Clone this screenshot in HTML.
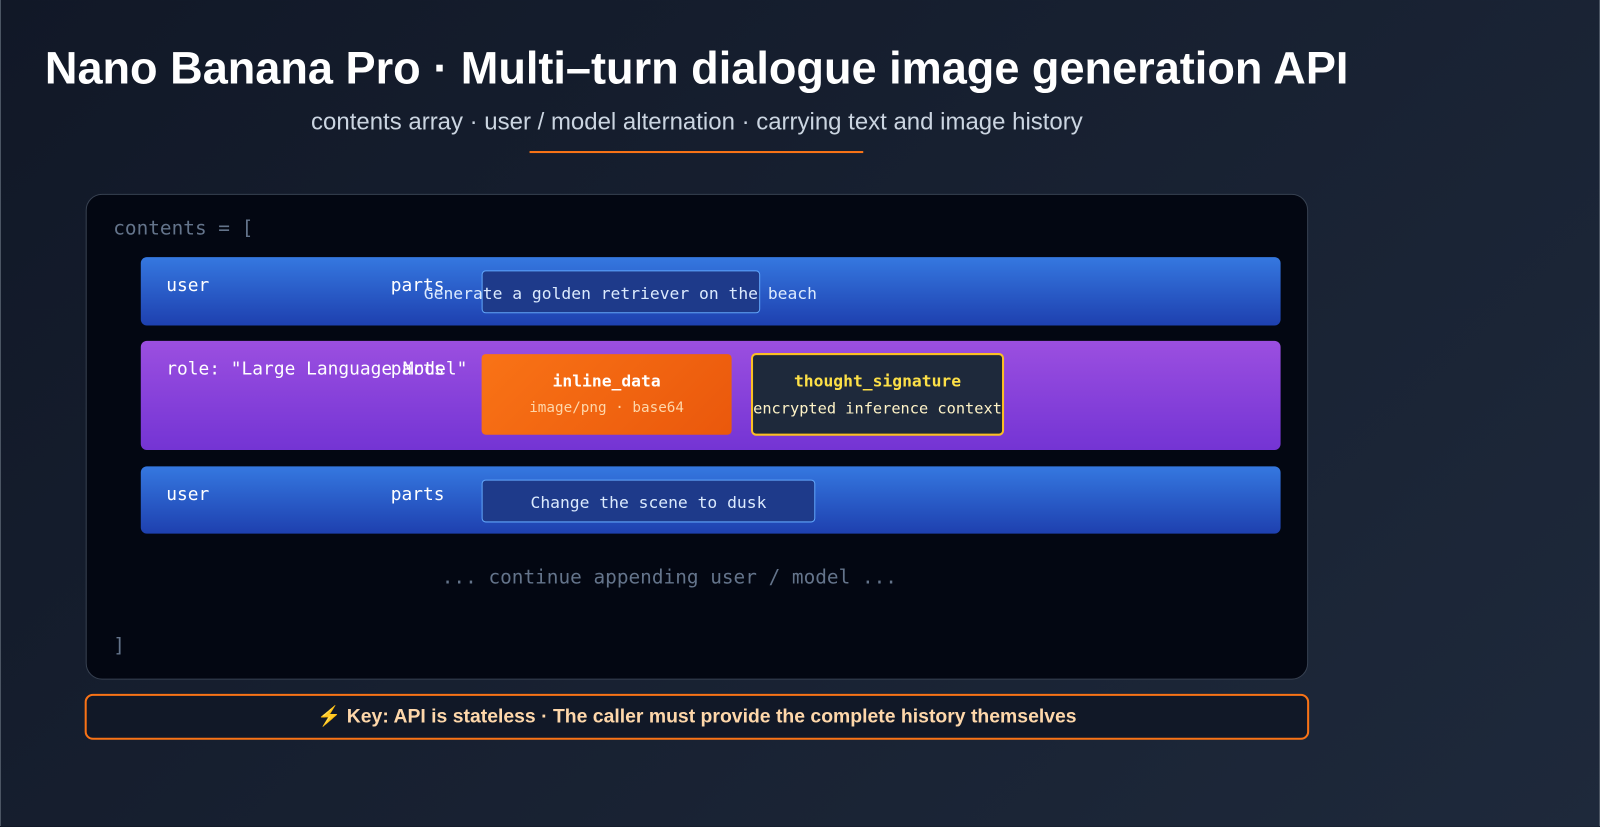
<!DOCTYPE html>
<html><head><meta charset="utf-8"><style>
html,body{margin:0;padding:0}
body{width:1600px;height:826px;overflow:hidden;position:relative;background:linear-gradient(135deg,#111827 0%,#1e293b 100%);font-family:"Liberation Sans",sans-serif;box-sizing:border-box;border-left:1px solid #4b5563;border-right:1px solid #4b5563}
#w{position:absolute;left:0;top:0;width:1568px;height:810px;transform:scale(1.0204);transform-origin:0 0}
.a{position:absolute}
.mono{font-family:"DejaVu Sans Mono","Liberation Mono",monospace}
h1{position:absolute;left:43px;top:40px;margin:0;font-size:44.2px;font-weight:bold;color:#fff;white-space:nowrap;line-height:56px}
.sub{left:0;width:1364px;top:104px;text-align:center;font-size:23.5px;color:#cbd5e1;line-height:30px;white-space:nowrap}
.line{left:518px;top:148px;width:327px;height:2px;background:#f97316}
.box{left:83px;top:190px;width:1196px;height:474px;background:#030712;border:1px solid #374151;border-radius:16px}
.row{left:137px;width:1117px;border-radius:6px}
.blue{background:linear-gradient(180deg,#3578e0,#1e40af)}
.purple{background:linear-gradient(180deg,#9b4fe0,#7434d4)}
.lbl{color:#fff;font-size:17.5px;line-height:22px;white-space:nowrap}
.tb{left:471px;background:#1e3a8a;border:1px solid #60a5fa;border-radius:4px;box-sizing:border-box}
.tt{color:#dbeafe;font-size:16px;white-space:nowrap;text-align:center;line-height:20px}
</style></head><body><div id="w">
<h1>Nano Banana Pro · Multi–turn dialogue image generation API</h1>
<div class="a sub">contents array · user / model alternation · carrying text and image history</div>
<div class="a line"></div>
<div class="a box"></div>
<div class="a mono" style="left:110px;top:212px;font-size:19px;color:#64748b;line-height:24px">contents = [</div>

<div class="a row blue" style="top:252px;height:67px"></div>
<div class="a mono lbl" style="left:162px;top:269px">user</div>
<div class="a tb" style="top:265px;width:273px;height:42px"></div>
<div class="a mono lbl" style="left:382px;top:269px">parts</div>
<div class="a mono tt" style="left:307px;width:600px;top:278px">Generate a golden retriever on the beach</div>

<div class="a row purple" style="top:334px;height:107px"></div>
<div class="a mono lbl" style="left:162px;top:351px">role: "Large Language Model"</div>
<div class="a mono lbl" style="left:382px;top:351px">parts</div>
<div class="a" style="left:471px;top:347px;width:245px;height:79px;border-radius:4px;background:linear-gradient(135deg,#f97316,#ea580c)"></div>
<div class="a mono" style="left:471px;width:245px;top:364px;text-align:center;color:#fff;font-weight:bold;font-size:16px;line-height:20px">inline_data</div>
<div class="a mono" style="left:471px;width:245px;top:391px;text-align:center;color:#fed7aa;font-size:14px;line-height:18px">image/png · base64</div>
<div class="a" style="left:735px;top:346px;width:248px;height:81px;box-sizing:border-box;border-radius:5px;background:#1e293b;border:2px solid #fbbf24"></div>
<div class="a mono" style="left:735px;width:248px;top:364px;text-align:center;color:#fde047;font-weight:bold;font-size:16px;line-height:20px">thought_signature</div>
<div class="a mono" style="left:735px;width:248px;top:391px;text-align:center;color:#fef3c7;font-size:15px;line-height:18px;white-space:nowrap">encrypted inference context</div>

<div class="a row blue" style="top:457px;height:66px"></div>
<div class="a mono lbl" style="left:162px;top:474px">user</div>
<div class="a mono lbl" style="left:382px;top:474px">parts</div>
<div class="a tb" style="top:470px;width:327px;height:42px"></div>
<div class="a mono tt" style="left:471px;width:327px;top:483px">Change the scene to dusk</div>

<div class="a mono" style="left:355px;width:600px;top:554px;text-align:center;font-size:19px;color:#64748b;line-height:24px">... continue appending user / model ...</div>
<div class="a mono" style="left:110px;top:621px;font-size:19px;color:#64748b;line-height:24px">]</div>

<div class="a" style="left:82px;top:680px;width:1200px;height:45px;box-sizing:border-box;border:2px solid #f97316;border-radius:8px;background:#111827"></div>
<div class="a" style="left:82px;width:1200px;top:691px;text-align:center;font-size:19px;font-weight:bold;color:#fed7aa;line-height:24px;white-space:nowrap">⚡ Key: API is stateless · The caller must provide the complete history themselves</div>
</div></body></html>
